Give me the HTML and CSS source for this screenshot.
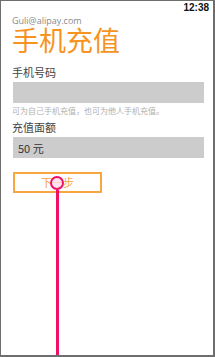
FILE: index.html
```html
<!DOCTYPE html>
<html>
<head>
<meta charset="utf-8">
<link rel="stylesheet" href="styles.css">
</head>
<body>
<div class="screen">
  <div class="status">12:38</div>
  <div class="content">
    <div class="account">Guli@alipay.com</div>
    <h1 class="title">手机充值</h1>
    <div class="label">手机号码</div>
    <div class="input"></div>
    <div class="hint">可为自己手机充值，也可为他人手机充值。</div>
    <div class="label label-2">充值面额</div>
    <div class="input"><span class="value">50 元</span></div>
    <div class="btn">下一步</div>
  </div>
  <div class="touch"><div class="dot"></div><div class="trail"></div></div>
</div>
</body>
</html>
```
FILE: styles.css
```css
html, body { margin: 0; padding: 0; background: #fff; }
.screen {
  position: relative;
  box-sizing: border-box;
  width: 215px;
  height: 357px;
  border-style: solid;
  border-color: #6e6e6e;
  border-width: 1px 2px 2px 1px;
  overflow: hidden;
  font-family: "Open Sans", "Noto Sans CJK SC", sans-serif;
}
.status {
  height: 15px;
  text-align: right;
  padding-right: 4px;
  font-size: 10px;
  line-height: 14px;
  font-weight: 700;
  color: #111;
  font-family: "Liberation Sans", sans-serif;
}
.content { padding: 0 9px 0 11px; }
.account {
  font-size: 9px;
  line-height: 10px;
  color: #8a8a8a;
  font-family: "Open Sans", sans-serif;
}
.title {
  margin: 0;
  font-weight: 400;
  font-size: 27px;
  line-height: 28px;
  color: #f7931e;
  font-family: "Noto Sans CJK SC", sans-serif;
}
.label {
  margin-top: 11px;
  font-size: 11px;
  line-height: 14px;
  color: #444;
  font-family: "Noto Sans CJK SC", sans-serif;
}
.label-2 { margin-top: 4px; }
.input {
  margin-top: 3px;
  margin-left: 1px;
  height: 21px;
  background: #cccccc;
  display: flex;
  align-items: center;
}
.value {
  padding-left: 5px;
  font-size: 11px;
  color: #333;
  font-family: "Noto Sans CJK SC", sans-serif;
}
.hint {
  margin-top: 3px;
  font-size: 8px;
  line-height: 10px;
  color: #b0b0b0;
  font-family: "Noto Sans CJK SC", sans-serif;
}
.btn {
  margin-top: 14px;
  margin-left: 1px;
  width: 85px;
  height: 17px;
  border: 2px solid #f7a640;
  color: #f7a640;
  font-size: 11px;
  line-height: 17px;
  text-align: center;
  font-family: "Noto Sans CJK SC", sans-serif;
}
.touch { position: absolute; left: 49px; top: 175px; width: 14px; }
.dot {
  box-sizing: border-box;
  width: 14px;
  height: 14px;
  border-radius: 50%;
  border: 2.5px solid #ee1166;
  background: rgba(255, 220, 235, 0.8);
}
.trail {
  width: 3px;
  height: 200px;
  margin-left: 6px;
  background: #ee1166;
}
```
